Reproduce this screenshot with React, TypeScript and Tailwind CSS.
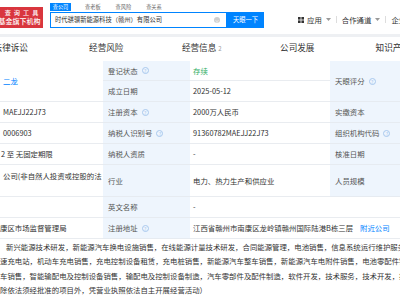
import React from "react";

const font = { fontFamily: '"Noto Sans CJK SC", "Noto Sans", sans-serif' };

function Q() {
  return (
    <span className="ml-[4px] inline-flex h-[7px] w-[7px] items-center justify-center rounded-full border border-[#a8c8ee] text-[5px] leading-none text-[#a8c8ee]">
      ?
    </span>
  );
}

function Caret() {
  return (
    <svg width="5" height="3" viewBox="0 0 5 3" className="ml-[4px]">
      <path d="M0 0h5L2.5 3z" fill="#999" />
    </svg>
  );
}

export default function App() {
  const label = "flex items-center bg-[#eef5fd] px-[5px] text-[#555] border-b border-[#e6ebf1] whitespace-nowrap";
  const base = "flex items-center px-[3px] border-b border-[#e9ecf0] whitespace-nowrap overflow-hidden";
  const val = `${base} text-[#333]`;
  return (
    <div style={font} className="h-[300px] w-[400px] overflow-hidden bg-white text-[7.4px] leading-none">
      {/* header */}
      <div className="relative flex h-[37px] items-start border-b-[3px] border-[#eef0f3] bg-white">
        <div className="mt-[7px] flex h-[21px] w-[43px] shrink-0 flex-col items-center justify-center overflow-hidden bg-[#d9363e] font-medium text-white">
          <div className="whitespace-nowrap text-[6.2px] tracking-[3px] pl-[3px]">查询工具</div>
          <div className="mt-[2px] whitespace-nowrap text-[7px] ml-[-4px]">基金旗下机构</div>
        </div>
        <div className="ml-[7px] flex flex-col">
          <div className="flex h-[12px] items-start pt-[3px] text-[5.2px] text-[#666]">
            <div className="flex h-[8px] w-[21px] items-center justify-center bg-[#0084ff] text-white">查公司</div>
            <div className="ml-[14px] flex h-[8px] items-center">查老板</div>
            <div className="ml-[15px] flex h-[8px] items-center">查风险</div>
            <div className="ml-[15px] flex h-[8px] items-center">查关系</div>
          </div>
          <div className="flex h-[16px]">
            <div className="flex w-[177px] items-center justify-between border border-[#0084ff] pl-[4px] pr-[6px] text-[6.3px] text-[#333]">
              <span className="whitespace-nowrap">时代骐骥新能源科技（赣州）有限公司</span>
              <span className="flex h-[6px] w-[6px] items-center justify-center rounded-full bg-[#cfcfcf] text-[5px] text-white">×</span>
            </div>
            <div className="flex w-[37px] items-center justify-center bg-[#0084ff] text-[6.3px] text-white">天眼一下</div>
          </div>
        </div>
        <div className="ml-[34px] mt-[16px] flex items-center whitespace-nowrap text-[7.4px] text-[#333]">
          <svg width="6" height="6" viewBox="0 0 6 6">
            <rect x="0" y="0" width="2.6" height="2.6" fill="#333" />
            <rect x="3.4" y="0" width="2.6" height="2.6" fill="#333" />
            <rect x="0" y="3.4" width="2.6" height="2.6" fill="#333" />
            <rect x="3.4" y="3.4" width="2.6" height="2.6" fill="#333" />
          </svg>
          <span className="ml-[3px]">应用</span>
          <Caret />
          <span className="mx-[5px] h-[7px] w-px bg-[#ddd]" />
          <span>合作通道</span>
          <Caret />
          <span className="mx-[5px] h-[7px] w-px bg-[#ddd]" />
          <span>企业</span>
        </div>
      </div>

      {/* tabs */}
      <div className="flex h-[24px] items-start whitespace-nowrap pt-[6px] text-[8.6px] text-[#333]">
        <div className="ml-[-37px] flex">
          <div className="w-[95.5px] text-center">法律诉讼</div>
          <div className="w-[95.5px] text-center">经营风险</div>
          <div className="w-[95.5px] text-center">
            经营信息<span className="ml-[2px] text-[6px] text-[#999]">2</span>
          </div>
          <div className="w-[95.5px] text-center">公司发展</div>
          <div className="w-[95.5px] text-center">知识产权</div>
        </div>
      </div>

      {/* info grid */}
      <div className="grid grid-cols-[103px_87px_140px_70px] grid-rows-[20px_21px_21px_21px_21px_32px_21px_21px]">
        <div className={`${base} row-span-2 px-0 text-[#0084ff]`}>二龙</div>
        <div className={label}>登记状态<Q /></div>
        <div className={`${base} text-[#2fae64]`}>存续</div>
        <div className={`${label} row-span-2`}>天眼评分<Q /></div>

        <div className={label}>成立日期</div>
        <div className={val}>2025-05-12</div>

        <div className={`${val} px-0`}>MAEJJ22J73</div>
        <div className={label}>注册资本<Q /></div>
        <div className={val}>2000万人民币</div>
        <div className={label}>实缴资本</div>

        <div className={`${val} px-0`}>0006903</div>
        <div className={label}>纳税人识别号<Q /></div>
        <div className={val}>91360782MAEJJ22J73</div>
        <div className={label}>组织机构代码<Q /></div>

        <div className={`${val} px-0 pl-[1px]`}>2 至 无固定期限</div>
        <div className={label}>纳税人资质</div>
        <div className={val}>-</div>
        <div className={label}>核准日期</div>

        <div className={`${val} items-start px-0 pt-[7px]`}>公司(非自然人投资或控股的法</div>
        <div className={label}>行业</div>
        <div className={val}>电力、热力生产和供应业</div>
        <div className={label}>人员规模</div>

        <div className={val}></div>
        <div className={label}>英文名称</div>
        <div className={`${val} col-span-2`}>-</div>

        <div className={`${val} px-0`}><span className="ml-[-3px]">康区市场监督管理局</span></div>
        <div className={label}>注册地址<Q /></div>
        <div className={`${val} col-span-2`}>
          江西省赣州市南康区龙岭镇赣州国际陆港B栋三层
          <span className="ml-[7px] text-[#0084ff]">附近公司</span>
        </div>
      </div>

      {/* business scope */}
      <div className="whitespace-nowrap pt-[1px] text-[7.4px] leading-[14.3px] text-[#333]">
        <div className="pl-[6px]">新兴能源技术研发，新能源汽车换电设施销售，在线能源计量技术研发，合同能源管理，电池销售，信息系统运行维护服务</div>
        <div>速充电站，机动车充电销售，充电控制设备租赁，充电桩销售，新能源汽车整车销售，新能源汽车电附件销售，电池零配件销售</div>
        <div>车销售，智能输配电及控制设备销售，输配电及控制设备制造，汽车零部件及配件制造，软件开发，技术服务，技术开发，技术咨询</div>
        <div>除依法须经批准的项目外，凭营业执照依法自主开展经营活动）</div>
      </div>
    </div>
  );
}
